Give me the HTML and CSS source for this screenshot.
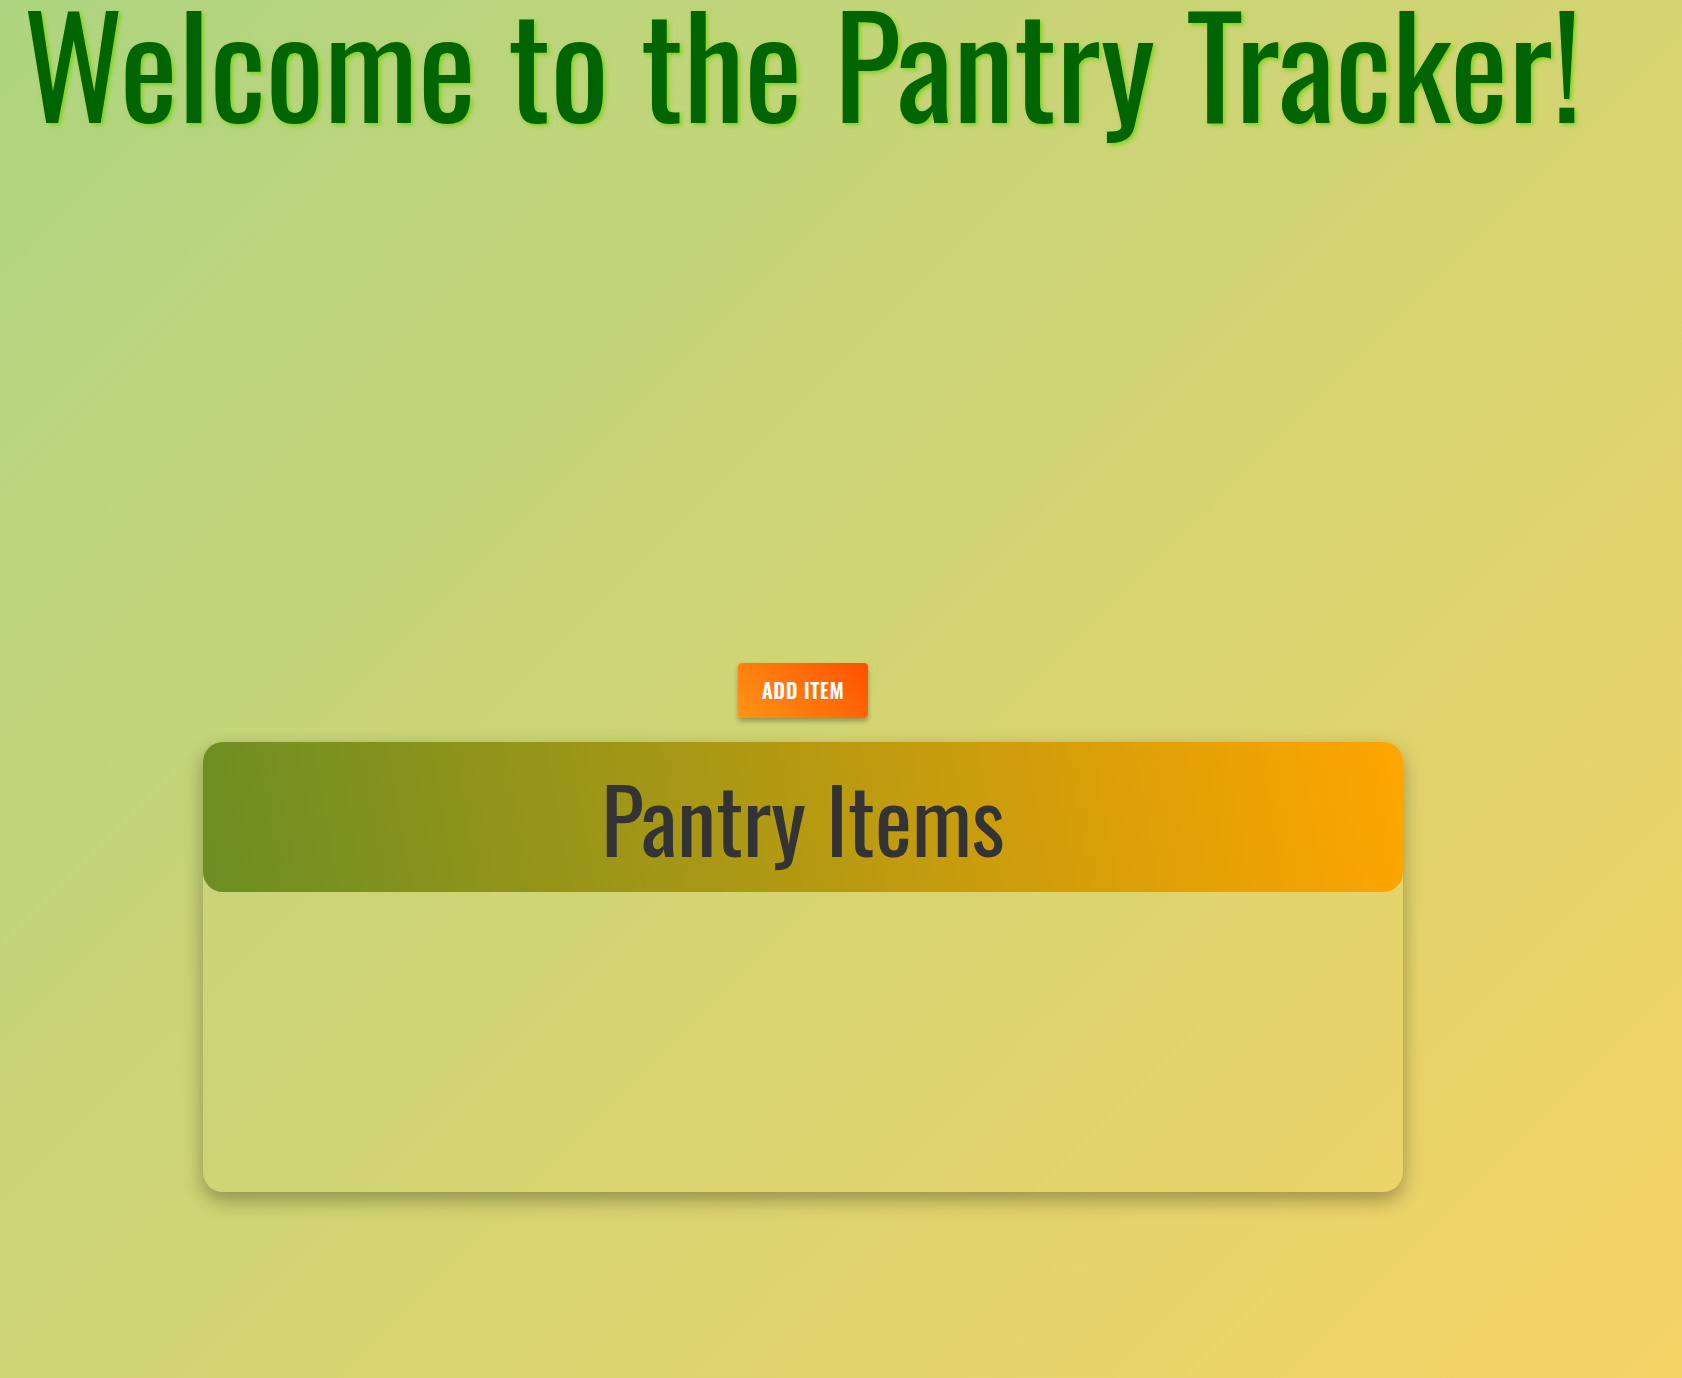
FILE: index.html
```html
<!DOCTYPE html>
<html lang="en">
<head>
<meta charset="utf-8">
<title>Pantry Tracker</title>
<link rel="stylesheet" href="styles.css">
</head>
<body>
<div class="page">
  <h1 class="title">Welcome to the Pantry Tracker!</h1>
  <div class="content">
    <button class="add-btn" type="button">Add Item</button>
    <section class="card">
      <header class="card-head">
        <h2 class="card-title">Pantry Items</h2>
      </header>
      <div class="card-body"></div>
    </section>
  </div>
</div>
</body>
</html>
```
FILE: styles.css
```css
html, body {
  margin: 0;
  padding: 0;
}
body {
  min-height: 100vh;
  background: linear-gradient(135deg, #aed581 0%, #f6d365 100%);
  font-family: "Oswald", "Liberation Sans", sans-serif;
  overflow: hidden;
}
.page {
  width: 1606px;
  min-height: 1378px;
  display: flex;
  flex-direction: column;
}
.title {
  margin: 0;
  padding-left: 23px;
  font-size: 138px;
  font-weight: 400;
  line-height: 0.88;
  color: #006400;
  text-shadow: 2px 2px 4px #7cd11a;
  white-space: nowrap;
  height: 140px;
}
.content {
  display: flex;
  flex-direction: column;
  align-items: center;
  padding-top: 523px;
}
.add-btn {
  width: 130px;
  height: 55px;
  border: 0;
  border-radius: 4px;
  background: linear-gradient(45deg, #ff9516 0%, #ff5000 100%);
  color: #fff;
  font-family: "Oswald", "Liberation Sans", sans-serif;
  font-size: 20.5px;
  font-weight: 600;
  letter-spacing: 0.6px;
  text-transform: uppercase;
  padding: 0 0 2px;
  box-shadow: 0 3px 5px rgba(0, 0, 0, 0.3);
  cursor: pointer;
}
.card {
  margin-top: 24px;
  width: 1200px;
  height: 450px;
  border-radius: 20px;
  box-shadow: 0 8px 20px rgba(0, 0, 0, 0.32);
  display: flex;
  flex-direction: column;
}
.card-head {
  height: 150px;
  border-radius: 20px;
  background: linear-gradient(80deg, #6b8e23 0%, #ffa500 100%);
  display: flex;
  align-items: center;
  justify-content: center;
}
.card-title {
  margin: 0;
  font-size: 88px;
  font-weight: 400;
  line-height: 1;
  color: #333333;
}
.card-body {
  flex: 1;
}
```
